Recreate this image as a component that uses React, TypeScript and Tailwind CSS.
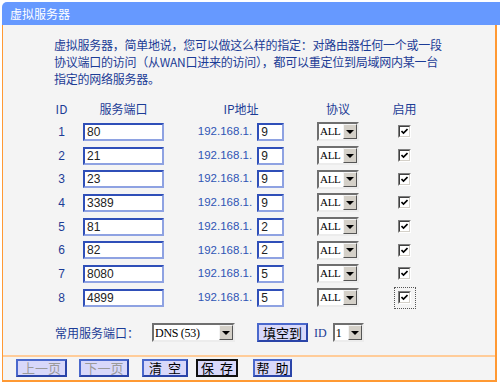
import React from 'react';

const cjk = 'font-["Noto_Sans_CJK_SC",sans-serif]';

const rows = [
  { id: 1, port: '80', ip: '9' },
  { id: 2, port: '21', ip: '9' },
  { id: 3, port: '23', ip: '9' },
  { id: 4, port: '3389', ip: '9' },
  { id: 5, port: '81', ip: '2' },
  { id: 6, port: '82', ip: '2' },
  { id: 7, port: '8080', ip: '5' },
  { id: 8, port: '4899', ip: '5' },
];

function TextBox({ value, className }: { value: string; className: string }) {
  return (
    <div
      className={`${className} h-[18px] bg-white border-2 border-t-[#2f4fb8] border-l-[#2f4fb8] border-b-[#8ea2e2] border-r-[#8ea2e2] flex items-center pl-[2px] text-[12px] leading-none text-[#222] font-["Liberation_Sans",sans-serif]`}
    >
      {value}
    </div>
  );
}

function Select({ text, className, textSize = 'text-[11px]' }: { text: string; className: string; textSize?: string }) {
  return (
    <div className={`${className} h-[19px] flex border-2 border-t-[#6f6f6f] border-l-[#6f6f6f] border-b-[#ececec] border-r-[#ececec] bg-white`}>
      <div className={`flex-1 min-w-0 flex items-center pl-[1px] ${textSize} tracking-[-0.3px] leading-none text-black font-["Liberation_Serif",serif] whitespace-pre`}>
        {text}
      </div>
      <div className="w-[14px] shrink-0 bg-[#d4d0c8] border border-t-[#f4f4f4] border-l-[#f4f4f4] border-b-[#555] border-r-[#555] flex items-center justify-center">
        <div className="w-0 h-0 border-l-[4px] border-r-[4px] border-t-[4px] border-l-transparent border-r-transparent border-t-black" />
      </div>
    </div>
  );
}

function Check() {
  return (
    <div className="w-[13px] h-[13px] border border-t-[#808080] border-l-[#808080] border-b-white border-r-white">
      <div className="w-full h-full border border-t-[#404040] border-l-[#404040] border-b-[#d4d0c8] border-r-[#d4d0c8] bg-white flex items-center justify-center">
        <svg width="7" height="7" viewBox="0 0 7 7">
          <path d="M0.5 3 L2.5 5 L6.5 1" stroke="#000" strokeWidth="1.6" fill="none" />
        </svg>
      </div>
    </div>
  );
}

function Btn({ label, className, disabled, active }: { label: string; className: string; disabled?: boolean; active?: boolean }) {
  const parts = label.split(' ');
  return (
    <div
      className={`${className} flex items-center justify-center gap-[6px] text-[13px] leading-none ${cjk} ${
        active ? 'border-2 border-[#111] bg-[#d8d8fa]' : 'border-2 border-t-[#4a68cc] border-l-[#4a68cc] border-b-[#2a44a8] border-r-[#2a44a8] bg-[#d8d8fa]'
      } ${disabled ? 'text-[#9a9a9a]' : 'text-black'}`}
    >
      {parts.map((p, i) => (
        <span key={i}>{p}</span>
      ))}
    </div>
  );
}

export default function App() {
  return (
    <div className="w-[500px] h-[383px] bg-white overflow-hidden">
      <div className="ml-[2px] pt-[2px] w-[498px]">
        {/* Header */}
        <div className={`h-[23px] bg-[#6699ff] rounded-tl-[5px] flex items-center pl-[8px] text-white text-[12px] leading-none ${cjk}`}>
          虚拟服务器
        </div>

        {/* Body */}
        <div className="w-[495px] h-[357px] bg-[#f4f4f4] border-l border-r-2 border-b-2 border-[#ff9933] flex flex-col">
          <p className={`mt-[11px] pl-[51px] text-[12px] leading-[17px] tracking-[-0.25px] text-[#1c3c96] whitespace-nowrap ${cjk}`}>
            虚拟服务器，简单地说，您可以做这么样的指定：对路由器任何一个或一段
            <br />
            协议端口的访问（从WAN口进来的访问），都可以重定位到局域网内某一台
            <br />
            指定的网络服务器。
          </p>

          {/* Table */}
          <div className="mt-[11px] ml-[38px]">
            <div className={`grid grid-cols-[41px_83px_152px_42px_91px] h-[22px] items-center text-[12px] leading-none text-[#1c3c96] ${cjk}`}>
              <div className="text-center">ID</div>
              <div className="text-center">服务端口</div>
              <div className="text-center">IP地址</div>
              <div className="text-center">协议</div>
              <div className="text-center">启用</div>
            </div>
            {rows.map((r) => (
              <div key={r.id} className="grid grid-cols-[41px_83px_152px_42px_91px] h-[23.7px] items-center">
                <div className='text-center text-[12px] leading-none text-[#1c3c96] font-["Liberation_Sans",sans-serif]'>{r.id}</div>
                <div className="flex justify-center">
                  <TextBox value={r.port} className="w-[81px]" />
                </div>
                <div className="flex items-center justify-center">
                  <span className='text-[11.5px] leading-none text-[#2f55b5] font-["Liberation_Sans",sans-serif] mr-[5px]'>192.168.1.</span>
                  <TextBox value={r.ip} className="w-[27px]" />
                </div>
                <div className="flex justify-center">
                  <Select text="ALL" className="w-[42px]" />
                </div>
                <div className="flex justify-center">
                  {r.id === 8 ? (
                    <div className="w-[22px] h-[22px] border border-dotted border-[#555] flex items-center justify-center">
                      <Check />
                    </div>
                  ) : (
                    <Check />
                  )}
                </div>
              </div>
            ))}
          </div>

          {/* Common ports */}
          <div className="mt-[13px] ml-[52px] flex items-center h-[20px]">
            <span className={`text-[12px] leading-none text-[#1c3c96] ${cjk}`}>常用服务端口：</span>
            <Select text="DNS (53)" textSize="text-[12px]" className="ml-[13px] w-[83px]" />
            <Btn label="填空到" className="ml-[22px] w-[51px] h-[19px]" />
            <span className='ml-[6px] text-[12px] leading-none text-[#1c3c96] font-["Liberation_Serif",serif]'>ID</span>
            <Select text="1" textSize="text-[12px]" className="ml-[6px] w-[31px]" />
          </div>

          {/* Separator */}
          <div className="mt-[12px] h-[2px] bg-[#ffcc99]" />

          {/* Bottom buttons */}
          <div className="mt-[2px] flex items-center">
            <Btn label="上一页" disabled className="ml-[13px] w-[51px] h-[18px]" />
            <Btn label="下一页" disabled className="ml-[12px] w-[50px] h-[18px]" />
            <Btn label="清 空" className="ml-[13px] w-[46px] h-[18px]" />
            <Btn label="保 存" active className="ml-[8px] w-[42px] h-[18px]" />
            <Btn label="帮 助" className="ml-[15px] w-[39px] h-[18px]" />
          </div>
        </div>
      </div>
    </div>
  );
}
